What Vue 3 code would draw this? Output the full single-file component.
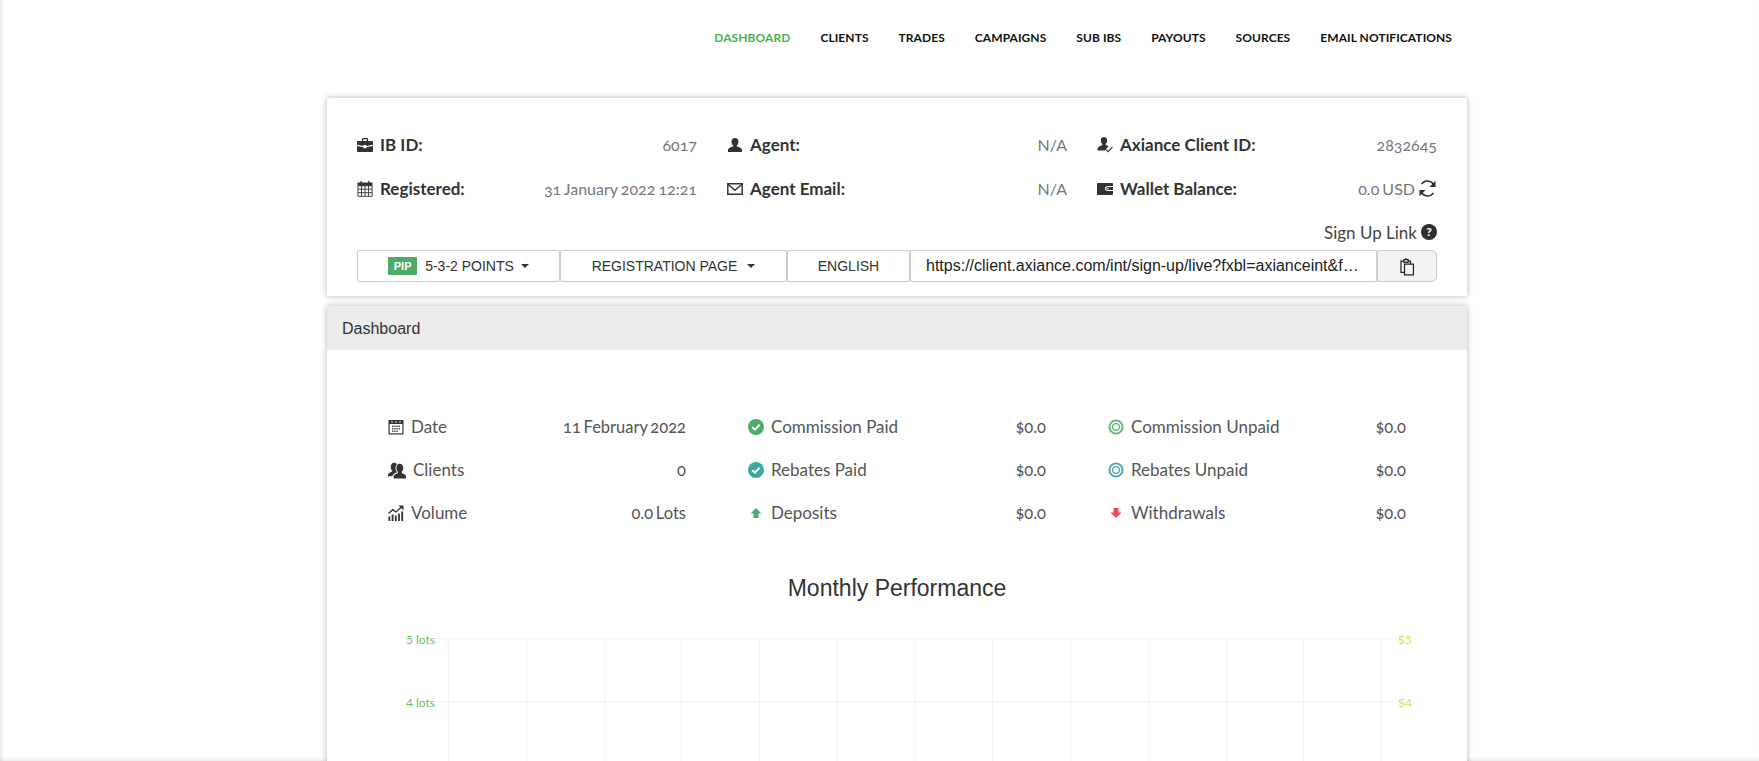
<template>
  <div class="page">
    <nav class="nav">
      <a v-for="(item, i) in navItems" :key="item" :class="{ active: i === 0 }">{{ item }}</a>
    </nav>

    <section class="card info-card">
      <div class="info-grid">
        <div class="info-row" v-for="row in infoRows" :key="row.label">
          <svg class="ic" viewBox="0 0 16 16" v-html="icons[row.icon]"></svg>
          <b>{{ row.label }}</b>
          <span class="val">{{ row.value }}</span>
          <svg v-if="row.refresh" class="refresh" viewBox="0 0 16 16" v-html="icons.refresh"></svg>
        </div>
      </div>
      <div class="signup">
        Sign Up Link
        <span class="help">?</span>
      </div>
      <div class="link-bar">
        <button class="seg seg-pip"><span class="pip">PIP</span>5-3-2 POINTS<i class="caret"></i></button>
        <button class="seg seg-reg">REGISTRATION PAGE<i class="caret"></i></button>
        <button class="seg seg-lang">ENGLISH</button>
        <div class="seg seg-url">https://client.axiance.com/int/sign-up/live?fxbl=axianceint&amp;f…</div>
        <button class="seg seg-copy">
          <svg viewBox="0 0 16 16" v-html="icons.copy"></svg>
        </button>
      </div>
    </section>

    <section class="card dash-card">
      <header class="dash-head">Dashboard</header>
      <div class="stats">
        <div class="stat" v-for="s in stats" :key="s.label">
          <svg class="ic" :class="{ wide: s.icon === 'users' }" viewBox="0 0 16 16" v-html="icons[s.icon]"></svg>
          <span class="stat-label">{{ s.label }}</span>
          <span class="stat-val">{{ s.value }}</span>
        </div>
      </div>
      <h2 class="chart-title">Monthly Performance</h2>
      <svg class="chart" viewBox="0 0 1138 400" width="1138" height="400">
        <line v-for="y in hLines" :key="'h' + y" x1="112" :y1="y" x2="1066" :y2="y" />
        <line v-for="x in vLines" :key="'v' + x" :x1="x" y1="17" :x2="x" y2="400" />
        <text class="lots" x="108" y="22" text-anchor="end">5 lots</text>
        <text class="lots" x="108" y="85" text-anchor="end">4 lots</text>
        <text class="usd" x="1071" y="22">$5</text>
        <text class="usd" x="1071" y="85">$4</text>
      </svg>
    </section>
  </div>
</template>

<script setup>
const navItems = ["DASHBOARD", "CLIENTS", "TRADES", "CAMPAIGNS", "SUB IBS", "PAYOUTS", "SOURCES", "EMAIL NOTIFICATIONS"];

const infoRows = [
  { icon: "briefcase", label: "IB ID:", value: "6017" },
  { icon: "user", label: "Agent:", value: "N/A" },
  { icon: "userCheck", label: "Axiance Client ID:", value: "2832645" },
  { icon: "calendar", label: "Registered:", value: "31 January 2022 12:21" },
  { icon: "mail", label: "Agent Email:", value: "N/A" },
  { icon: "wallet", label: "Wallet Balance:", value: "0.0 USD", refresh: true },
];

const stats = [
  { icon: "date", label: "Date", value: "11 February 2022" },
  { icon: "checkGreen", label: "Commission Paid", value: "$0.0" },
  { icon: "ringGreen", label: "Commission Unpaid", value: "$0.0" },
  { icon: "users", label: "Clients", value: "0" },
  { icon: "checkTeal", label: "Rebates Paid", value: "$0.0" },
  { icon: "ringTeal", label: "Rebates Unpaid", value: "$0.0" },
  { icon: "volume", label: "Volume", value: "0.0 Lots" },
  { icon: "up", label: "Deposits", value: "$0.0" },
  { icon: "down", label: "Withdrawals", value: "$0.0" },
];

const hLines = [17, 80, 143, 206, 269, 332, 395];
const vLines = Array.from({ length: 13 }, (_, i) => Math.round(121 + i * 77.75) + 0.5);

const dark = "#333";
const check = (fill) => `<circle cx="8" cy="8" r="8" fill="${fill}"/><path d="M4.300 8.200l2.600 2.500 4.800-4.900" fill="none" stroke="#fff" stroke-width="2"/>`;
const ring = (c) => `<circle cx="8" cy="8" r="6.600" fill="none" stroke="${c}" stroke-width="1.900"/><circle cx="8" cy="8" r="3.400" fill="none" stroke="${c}" stroke-width="1.300"/>`;

const icons = {
  briefcase: `<path fill="${dark}" d="M5 4V1.800c0-.4.300-.8.800-.8h4.400c.5 0 .8.400.8.800V4h4c.6 0 1 .4 1 1v2.800L9.500 9V8h-3v1L0 7.800V5c0-.6.400-1 1-1zM6.200 4h3.600V2.300H6.200z"/><path fill="${dark}" d="M0 9l6.500 1.200v1h3v-1L16 9v5c0 .6-.4 1-1 1H1c-.6 0-1-.4-1-1z"/>`,
  user: `<path fill="${dark}" d="M8 1c2.200 0 3.500 1.700 3.500 3.800 0 1.500-.6 2.800-1.600 3.700v1.100c2 .6 5.100 1.500 5.100 3.400V15H1v-2c0-1.900 3.100-2.800 5.100-3.400V8.500C5.100 7.600 4.500 6.300 4.500 4.800 4.500 2.700 5.800 1 8 1z"/>`,
  userCheck: `<path fill="${dark}" d="M7 0c2 0 3.200 1.500 3.200 3.500 0 1.400-.6 2.600-1.500 3.400v1.200c.9.300 2 .7 2.800 1.200L8 13.500H.5V12c0-1.800 2.900-3.100 4.800-3.900V6.900C4.400 6.100 3.800 4.900 3.800 3.500 3.800 1.500 5 0 7 0z"/><path d="M9 12.600l2.100 2.100 4.400-4.500" fill="none" stroke="${dark}" stroke-width="1.100"/>`,
  calendar: `<path fill="${dark}" d="M3.500 0h1.300v2.500H3.500zM11.200 0h1.300v2.500h-1.300z"/><path fill="${dark}" d="M.5 1.500h15v3.300H.5z"/><path fill="none" stroke="${dark}" stroke-width=".9" d="M.9 4.800h14.200v10.500H.9zM.9 8.200h14.200M.9 11.700h14.200M4.500 4.800v10.500M8 4.800v10.500M11.500 4.800v10.500"/>`,
  mail: `<path fill="none" stroke="${dark}" stroke-width="1.500" d="M.8 2.800h14.400v10.400H.8z"/><path fill="none" stroke="${dark}" stroke-width="1.500" d="M1 3.300l7 6 7-6"/>`,
  wallet: `<path fill="${dark}" d="M1 2h14c.6 0 1 .4 1 1v2h-5.500C9.100 5 8 6.100 8 7.500S9.100 10 10.500 10H16v3c0 .6-.4 1-1 1H1c-.6 0-1-.4-1-1V3c0-.6.4-1 1-1z"/><path fill="${dark}" d="M10.700 6H16v3h-5.300c-.8 0-1.500-.6-1.500-1.500S9.900 6 10.700 6z"/><circle cx="11" cy="7.500" r=".8" fill="#fff"/>`,
  refresh: `<path fill="none" stroke="${dark}" stroke-width="1.400" d="M13.800 6.500A6 6 0 0 0 3 4.300M2.200 9.500A6 6 0 0 0 13 11.700"/><path fill="${dark}" d="M14.800 1.500v5.300H9.500zM1.200 14.500V9.200h5.300z"/>`,
  copy: `<path fill="none" stroke="#222" stroke-width="1" d="M5 3.500H2.500v9.500h3M10.500 5.500v-2H8M5 2.200h3.500v2.300H5zM5.500 6h7.500v9H5.500z"/><path fill="#222" d="M6 1h1.500v1.500H6z"/>`,
  date: `<path fill="${dark}" d="M.5 1h15v14.500H.5z"/><path fill="#fff" d="M1.700 5h12.600v9.300H1.700z"/><path fill="#fff" d="M3.500 2h1v1.800h-1zM7.500 2h1v1.800h-1zM11.500 2h1v1.800h-1z"/><path fill="#555" d="M4 6.600h1.500v1.500H4zM6.200 6.600h1.500v1.500H6.200zM8.400 6.600h1.500v1.500H8.400zM10.600 6.600h1.500v1.500h-1.500zM4 9h1.500v1.500H4zM6.200 9h1.500v1.500H6.200zM8.400 9h1.500v1.500H8.400zM10.600 9h1.500v1.500h-1.500zM4 11.400h1.500v1.500H4zM6.200 11.400h1.500v1.500H6.200zM8.400 11.400h1.500v1.500H8.400z"/>`,
  users: `<path fill="${dark}" d="M5.500 1.500c1.200 0 2 .6 2.400 1.500-.9.800-1.300 2-1.300 3.200 0 1.300.4 2.500 1.200 3.400v.7c-1.600.5-3.600 1.300-4 3.200H0v-1.200c0-1.300 1.900-2.300 3.700-3V8.600C2.900 7.800 2.400 6.600 2.400 5.300c0-2.100 1.100-3.800 3.100-3.800z"/><path fill="${dark}" d="M10.500 2.500c2 0 3.100 1.700 3.100 3.800 0 1.300-.5 2.500-1.300 3.300v1.300c1.800.6 3.700 1.300 3.700 2.600v2H5v-2c0-1.300 1.900-2 3.700-2.600V9.600c-.8-.8-1.300-2-1.300-3.300 0-2.100 1.100-3.800 3.100-3.800z"/>`,
  volume: `<path fill="${dark}" d="M.5 11.500h1.800V16H.5zM3.700 9.500h1.800V16H3.700zM6.900 10.500h1.800V16H6.900zM10.100 8.500h1.800V16h-1.800zM13.300 6.500h1.800V16h-1.800z"/><path fill="none" stroke="${dark}" stroke-width="1.300" d="M.5 8.500l4.200-3.800 3.300 2.300 5.500-5"/><path fill="${dark}" d="M10.500 .5H15.500v5z"/>`,
  checkGreen: check("#4dab67"),
  checkTeal: check("#3aa99f"),
  ringGreen: ring("#5cb870"),
  ringTeal: ring("#45aaa3"),
  up: `<path fill="#4dab67" d="M8 3l5.500 5.500H10.500v4.500h-5V8.500H2.500z"/>`,
  down: `<path fill="#ef4b56" d="M8 13l5.500-5.500H10.500V3h-5v4.500H2.500z"/>`,
};
</script>

<style scoped>
.page {
  width: 1759px;
  height: 761px;
  font-family: Lato, "Liberation Sans", sans-serif;
  color: #444;
  box-shadow: inset 4px 0 4px -3px rgba(0, 0, 0, 0.14), inset 0 -4px 4px -3px rgba(0, 0, 0, 0.1);
}

.nav {
  display: flex;
  justify-content: flex-end;
  gap: 30px;
  width: 1452px;
  padding-top: 30px;
  height: 68px;
  box-sizing: border-box;
  font-size: 12px;
  line-height: 15px;
  font-weight: 700;
  letter-spacing: 0.07px;
  color: #111;
}
.nav a.active {
  color: #4ab34f;
}

.card {
  width: 1140px;
  margin: 0 0 10px 327px;
  background: #fff;
  box-shadow: 0 0 6px rgba(0, 0, 0, 0.3);
  box-sizing: border-box;
}

.info-card {
  margin-top: 30px;
  height: 198px;
  padding: 24px 30px 0;
}
.info-grid {
  display: grid;
  grid-template-columns: repeat(3, 340px);
  column-gap: 30px;
}
.info-row {
  display: flex;
  align-items: center;
  height: 44px;
  font-size: 16px;
}
.info-row .ic {
  width: 16px;
  height: 16px;
  margin: 2px 7px 0 0;
  flex: none;
}
.info-row b {
  color: #333;
  font-size: 17px;
  font-weight: 700;
}
.val {
  margin-left: auto;
  color: #777;
  word-spacing: -1px;
  font-variant-numeric: oldstyle-nums;
}
.refresh {
  width: 19px;
  height: 19px;
  margin-left: 3px;
}

.signup {
  display: flex;
  justify-content: flex-end;
  align-items: center;
  gap: 4px;
  height: 22px;
  margin-top: 11px;
  font-size: 17px;
  color: #444;
}
.help {
  width: 16px;
  height: 16px;
  border-radius: 50%;
  background: #2e2e2e;
  color: #fff;
  font-size: 12px;
  font-weight: 900;
  line-height: 16px;
  text-align: center;
}

.link-bar {
  display: flex;
  height: 32px;
  margin-top: 7px;
  font-family: "Liberation Sans", Arial, sans-serif;
  font-size: 14px;
  color: #333;
}
.seg {
  display: flex;
  align-items: center;
  justify-content: center;
  box-sizing: border-box;
  height: 32px;
  padding: 0;
  background: #fff;
  border: 1px solid #cdcdcd;
  border-radius: 2px;
  box-shadow: 0 0 1px #ddd;
  font: inherit;
  color: inherit;
}
.seg-pip {
  width: 203px;
}
.seg-reg {
  width: 227px;
}
.seg-lang {
  width: 123px;
}
.seg-url {
  width: 467px;
  justify-content: flex-start;
  padding: 0 15px;
  font-size: 16px;
  white-space: nowrap;
  overflow: hidden;
  color: #222;
}
.seg-copy {
  width: 60px;
  border-radius: 0 6px 6px 0;
  background: #f2f2f2;
}
.seg-copy svg {
  width: 19px;
  height: 19px;
}
.pip {
  width: 29px;
  height: 18px;
  margin-right: 8px;
  background: #4dab67;
  color: #fff;
  font-size: 11px;
  font-weight: 700;
  line-height: 18px;
  border-radius: 1px;
}
.caret {
  width: 0;
  height: 0;
  margin-left: 7px;
  border: 4.500px solid transparent;
  border-top-color: #333;
  border-bottom-width: 0;
}
.seg-reg .caret {
  margin-left: 10px;
}

.dash-card {
  height: 800px;
}
.dash-head {
  height: 44px;
  padding-left: 15px;
  background: #ebebeb;
  font-family: "Liberation Sans", Arial, sans-serif;
  font-size: 16px;
  line-height: 46px;
  color: #333;
}
.stats {
  display: grid;
  grid-template-columns: repeat(3, 298px);
  column-gap: 62px;
  padding: 55px 61px 0;
}
.stat {
  display: flex;
  align-items: center;
  height: 43px;
  font-size: 17px;
  color: #555;
}
.stat .ic {
  width: 16px;
  height: 16px;
  margin-right: 7px;
  flex: none;
}
.stat .ic.wide {
  width: 18px;
  height: 18px;
  margin-right: 7px;
}
.stat-val {
  margin-left: auto;
  font-size: 16.500px;
  word-spacing: -1.500px;
  font-variant-numeric: oldstyle-nums;
}
.chart-title {
  margin: 39px 0 0;
  text-align: center;
  font-family: "Liberation Sans", Arial, sans-serif;
  font-size: 23px;
  font-weight: 400;
  line-height: 30px;
  color: #333;
}
.chart {
  display: block;
  margin-top: 19px;
}
.chart line {
  stroke: #f2f2f2;
  stroke-width: 1;
}
.chart text {
  font-family: Lato, sans-serif;
  font-size: 12px;
}
.lots {
  fill: #66bf6b;
}
.usd {
  fill: #d4e157;
}
</style>

<style>
html,
body {
  margin: 0;
  height: 761px;
  overflow: hidden;
  background: #fff;
}
</style>
